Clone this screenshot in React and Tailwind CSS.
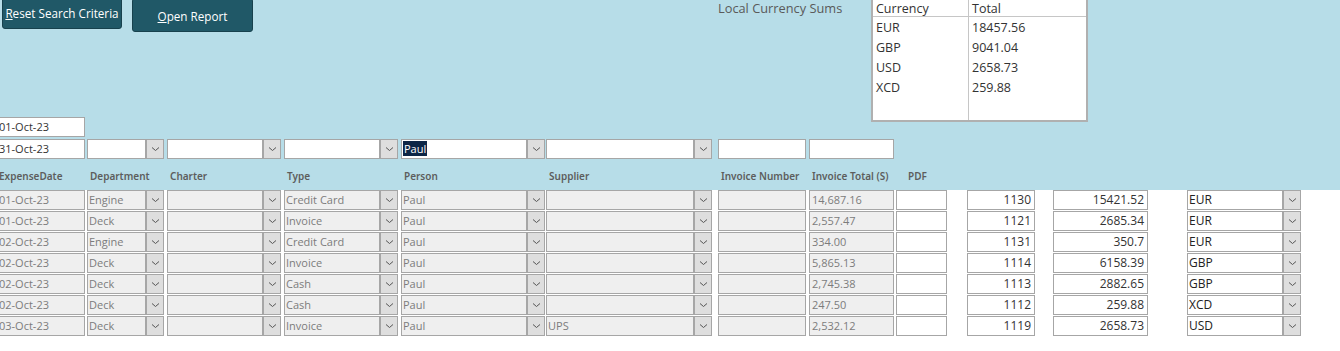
import React from 'react';

const cols = [
  { key: 'date', ml: 'ml-[-4px]', w: 'w-[89px]', label: 'ExpenseDate' },
  { key: 'dept', ml: 'ml-[2px]', w: 'w-[77px]', combo: true, label: 'Department' },
  { key: 'charter', ml: 'ml-[3px]', w: 'w-[114px]', combo: true, label: 'Charter' },
  { key: 'type', ml: 'ml-[3px]', w: 'w-[114px]', combo: true, label: 'Type' },
  { key: 'person', ml: 'ml-[3px]', w: 'w-[144px]', combo: true, label: 'Person' },
  { key: 'supplier', ml: 'ml-[1px]', w: 'w-[166px]', combo: true, label: 'Supplier' },
  { key: 'invno', ml: 'ml-[6px]', w: 'w-[88px]', label: 'Invoice Number' },
  { key: 'invtotal', ml: 'ml-[3px]', w: 'w-[85px]', label: 'Invoice Total (S)' },
  { key: 'pdf', ml: 'ml-[2px]', w: 'w-[51px]', label: 'PDF' },
];

const rows = [
  { date: '01-Oct-23', dept: 'Engine', type: 'Credit Card', person: 'Paul', supplier: '', invtotal: '14,687.16', id: '1130', amount: '15421.52', cur: 'EUR' },
  { date: '01-Oct-23', dept: 'Deck', type: 'Invoice', person: 'Paul', supplier: '', invtotal: '2,557.47', id: '1121', amount: '2685.34', cur: 'EUR' },
  { date: '02-Oct-23', dept: 'Engine', type: 'Credit Card', person: 'Paul', supplier: '', invtotal: '334.00', id: '1131', amount: '350.7', cur: 'EUR' },
  { date: '02-Oct-23', dept: 'Deck', type: 'Invoice', person: 'Paul', supplier: '', invtotal: '5,865.13', id: '1114', amount: '6158.39', cur: 'GBP' },
  { date: '02-Oct-23', dept: 'Deck', type: 'Cash', person: 'Paul', supplier: '', invtotal: '2,745.38', id: '1113', amount: '2882.65', cur: 'GBP' },
  { date: '02-Oct-23', dept: 'Deck', type: 'Cash', person: 'Paul', supplier: '', invtotal: '247.50', id: '1112', amount: '259.88', cur: 'XCD' },
  { date: '03-Oct-23', dept: 'Deck', type: 'Invoice', person: 'Paul', supplier: 'UPS', invtotal: '2,532.12', id: '1119', amount: '2658.73', cur: 'USD' },
];

const sums = [
  ['EUR', '18457.56'],
  ['GBP', '9041.04'],
  ['USD', '2658.73'],
  ['XCD', '259.88'],
];

const Chevron = () => (
  <svg width="9" height="6" viewBox="0 0 9 6" fill="none">
    <path d="M1 1.5L4.5 4.5L8 1.5" stroke="#555" strokeWidth="1" />
  </svg>
);

const Box = ({ className, children, bg = 'bg-white', text = 'text-[#333]' }) => (
  <div
    className={`h-[20px] shrink-0 border border-[#a6a6a6] ${bg} ${text} ${className} pl-[2px] leading-[17px] text-[11px] overflow-hidden whitespace-nowrap`}
  >
    {children}
  </div>
);

const Combo = ({ className, children, bg = 'bg-white', text = 'text-[#333]' }) => (
  <div className={`h-[20px] shrink-0 flex border border-[#a6a6a6] ${bg} ${className}`}>
    <div className={`flex-1 min-w-0 pl-[1px] leading-[17px] text-[11px] overflow-hidden whitespace-nowrap ${text}`}>
      {children}
    </div>
    <div className="w-[18px] shrink-0 flex items-center justify-center bg-[#dedede] border-l-2 border-[#a6a6a6]">
      <Chevron />
    </div>
  </div>
);

export default function App() {
  return (
    <div className="w-[1340px] h-[351px] bg-white overflow-hidden" style={{ fontFamily: '"Open Sans", "Noto Sans", sans-serif' }}>
      {/* Search area */}
      <div className="h-[190px] bg-[#b7dde8] flex flex-col">
        <div className="h-[117px] flex items-start">
          <button className="ml-[2px] mt-[-4px] w-[120px] h-[33px] rounded-[3px] bg-[#205867] border border-[#17414d] text-white text-[11.7px] pt-[3px]">
            <span className="underline">R</span>eset Search Criteria
          </button>
          <button className="ml-[10px] mt-[-2px] w-[121px] h-[34px] rounded-[3px] bg-[#205867] border border-[#17414d] text-white text-[11.7px] pt-[3px]">
            <span className="underline">O</span>pen Report
          </button>
          <div className="ml-[465px] mt-[-1px] w-[153px] shrink-0 text-[12.8px] text-[#5a5a5a]">Local Currency Sums</div>
          <div className="mt-[-2px] w-[217px] h-[124px] shrink-0 bg-white border-2 border-[#b0b0b0] flex text-[12.5px] text-[#333]">
            <div className="w-[96px] border-r border-[#c6c6c6]">
              <div className="h-[17px] leading-[17px] pl-[3px] border-b border-[#c6c6c6]">Currency</div>
              {sums.map(([c]) => (
                <div key={c} className="h-[19px] leading-[19px] pl-[3px] mt-[1px]">{c}</div>
              ))}
            </div>
            <div className="flex-1">
              <div className="h-[17px] leading-[17px] pl-[3px] border-b border-[#c6c6c6]">Total</div>
              {sums.map(([c, t]) => (
                <div key={c} className="h-[19px] leading-[19px] pl-[3px] mt-[1px]">{t}</div>
              ))}
            </div>
          </div>
        </div>

        {/* Filters */}
        <div className="flex">
          <Box className="ml-[-4px] w-[89px]">01-Oct-23</Box>
        </div>
        <div className="flex mt-[2px]">
          <Box className="ml-[-4px] w-[89px]">31-Oct-23</Box>
          <Combo className="ml-[2px] w-[77px]" />
          <Combo className="ml-[3px] w-[114px]" />
          <Combo className="ml-[3px] w-[114px]" />
          <Combo className="ml-[3px] w-[144px]">
            <span className="bg-[#0d2646] text-white px-[1px]">Paul</span>
          </Combo>
          <Combo className="ml-[1px] w-[166px]" />
          <Box className="ml-[6px] w-[88px]" />
          <Box className="ml-[3px] w-[85px]" />
        </div>

        {/* Headers */}
        <div className="flex mt-[10px] text-[10px] font-semibold text-[#5d5d5d]" style={{ fontFamily: '"Noto Sans", sans-serif' }}>
          {cols.map((c) => (
            <div key={c.key} className={`${c.ml} ${c.w} shrink-0 whitespace-nowrap ${c.key === 'pdf' ? 'pl-[12px]' : 'pl-[3px]'}`}>
              {c.label}
            </div>
          ))}
        </div>
      </div>

      {/* Results */}
      <div className="flex flex-col gap-[1px]">
        {rows.map((r, i) => (
          <div key={i} className="flex">
            <Box className="ml-[-4px] w-[89px]" bg="bg-[#efefef]" text="text-[#7c7c7c]">{r.date}</Box>
            <Combo className="ml-[2px] w-[77px]" bg="bg-[#efefef]" text="text-[#7c7c7c]">{r.dept}</Combo>
            <Combo className="ml-[3px] w-[114px]" bg="bg-[#efefef]" text="text-[#7c7c7c]" />
            <Combo className="ml-[3px] w-[114px]" bg="bg-[#efefef]" text="text-[#7c7c7c]">{r.type}</Combo>
            <Combo className="ml-[3px] w-[144px]" bg="bg-[#efefef]" text="text-[#7c7c7c]">{r.person}</Combo>
            <Combo className="ml-[1px] w-[166px]" bg="bg-[#efefef]" text="text-[#7c7c7c]">{r.supplier}</Combo>
            <Box className="ml-[6px] w-[88px]" bg="bg-[#efefef]" text="text-[#7c7c7c]" />
            <Box className="ml-[3px] w-[85px]" bg="bg-[#efefef]" text="text-[#7c7c7c]">{r.invtotal}</Box>
            <Box className="ml-[2px] w-[51px]" />
            <Box className="ml-[20px] w-[68px] text-right pr-[3px] text-[12px]">{r.id}</Box>
            <Box className="ml-[18px] w-[95px] text-right pr-[3px] text-[12px]">{r.amount}</Box>
            <Combo className="ml-[39px] w-[114px]" text="text-[#222] text-[12px]">{r.cur}</Combo>
          </div>
        ))}
      </div>
    </div>
  );
}
